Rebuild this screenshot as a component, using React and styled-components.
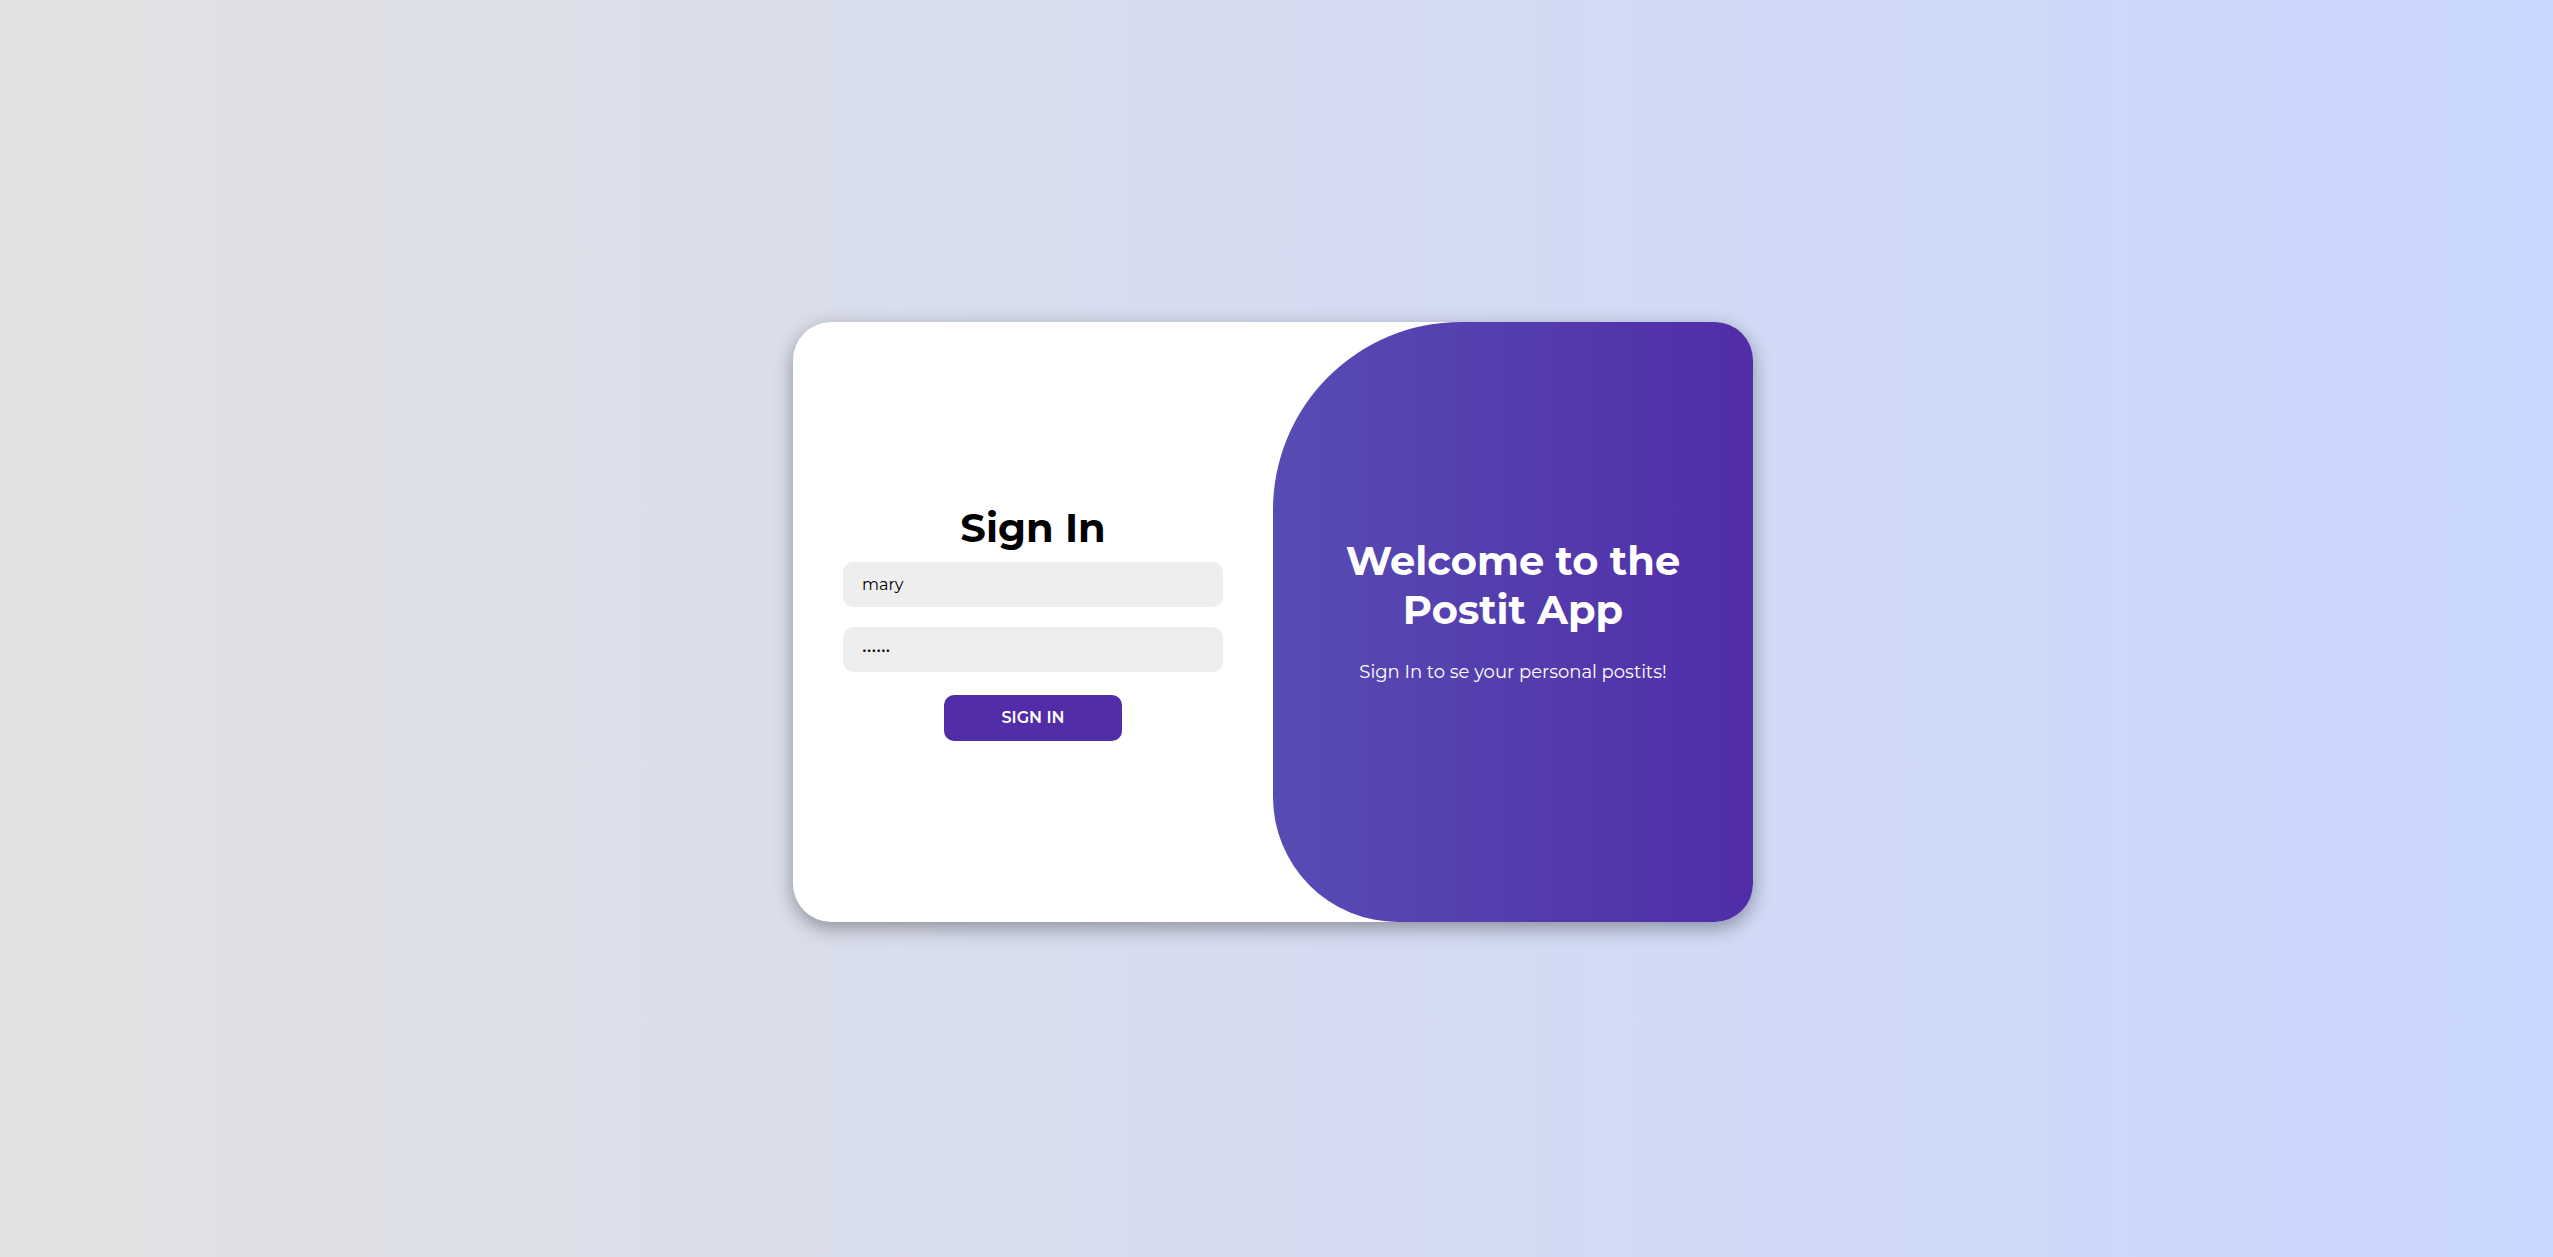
import React, { useState } from "react";
import styled, { createGlobalStyle } from "styled-components";

const GlobalStyle = createGlobalStyle`
  * {
    box-sizing: border-box;
    margin: 0;
    padding: 0;
  }

  body {
    font-family: Montserrat, Inter, "Open Sans", sans-serif;
    background: linear-gradient(to right, #e2e2e2, #c9d6ff);
  }
`;

const Page = styled.main`
  display: flex;
  align-items: center;
  justify-content: center;
  min-height: 100vh;
  padding: 0 7px 13px 0;
`;

const Card = styled.div`
  display: grid;
  grid-template-columns: 1fr 1fr;
  width: 960px;
  max-width: 100%;
  min-height: 600px;
  overflow: hidden;
  border-radius: 38px;
  background: #fff;
  box-shadow: 0 6px 19px rgba(0, 0, 0, 0.35);
`;

const Form = styled.form`
  display: flex;
  flex-direction: column;
  align-items: center;
  justify-content: center;
  padding: 0 50px;
`;

const Title = styled.h1`
  font-size: 40px;
  font-weight: 700;
  line-height: 49px;
`;

const Field = styled.input`
  width: 100%;
  margin: 10px 0;
  padding: 13px 19px 12px;
  border: none;
  border-radius: 10px;
  outline: none;
  background: #eee;
  color: #000;
  font-family: inherit;
  font-size: 16px;
  line-height: 20px;
`;

const SubmitButton = styled.button`
  margin-top: 13px;
  padding: 13px 58px;
  border: none;
  border-radius: 10px;
  background: #512da8;
  color: #fff;
  font-family: inherit;
  font-size: 16px;
  font-weight: 600;
  line-height: 20px;
  text-transform: uppercase;
  cursor: pointer;
`;

const Welcome = styled.section`
  display: flex;
  flex-direction: column;
  align-items: center;
  justify-content: center;
  padding: 0 38px;
  border-radius: 188px 0 0 125px;
  background: linear-gradient(to right, #574cb4, #512da8);
  color: #fff;
  text-align: center;
`;

const Message = styled.p`
  margin: 26px 0 24px;
  font-size: 18px;
  line-height: 25px;
`;

export default function App() {
  const [user, setUser] = useState("mary");
  const [password, setPassword] = useState("secret");

  return (
    <>
      <GlobalStyle />
      <Page>
        <Card>
          <Form onSubmit={(event) => event.preventDefault()}>
            <Title>Sign In</Title>
            <Field
              type="text"
              aria-label="Username"
              value={user}
              onChange={(event) => setUser(event.target.value)}
            />
            <Field
              type="password"
              aria-label="Password"
              value={password}
              onChange={(event) => setPassword(event.target.value)}
            />
            <SubmitButton type="submit">Sign In</SubmitButton>
          </Form>
          <Welcome>
            <Title>Welcome to the Postit App</Title>
            <Message>Sign In to se your personal postits!</Message>
          </Welcome>
        </Card>
      </Page>
    </>
  );
}
